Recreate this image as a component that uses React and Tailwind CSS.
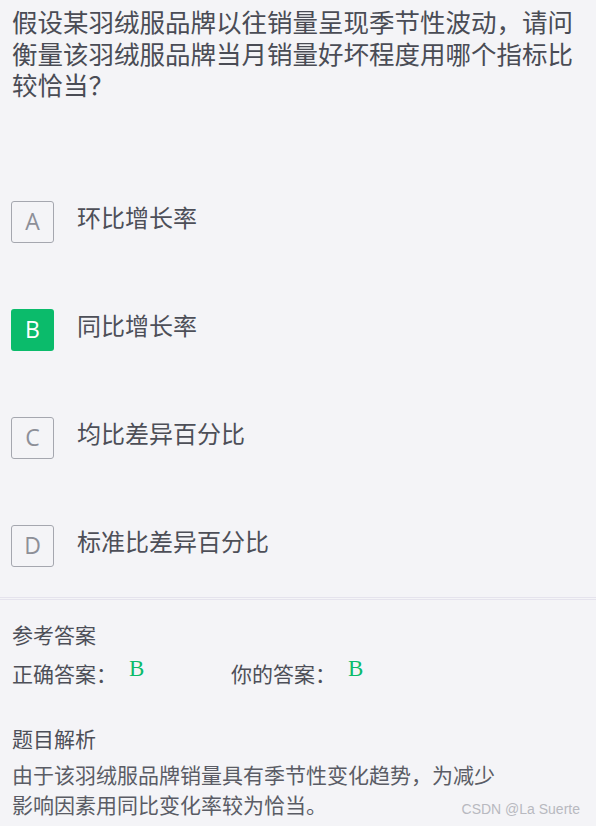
const options = [
  { key: 'A', text: '环比增长率' },
  { key: 'B', text: '同比增长率', picked: true },
  { key: 'C', text: '均比差异百分比' },
  { key: 'D', text: '标准比差异百分比' },
];

const App = () => {
  return (
    <div className="relative w-[596px] min-h-[826px] bg-[#f4f4f7] text-[#4a4c55] font-['Noto_Sans_CJK_SC',sans-serif]">
      <p className="px-3 pt-[5px] text-[25.5px] leading-[31.5px]">
        假设某羽绒服品牌以往销量呈现季节性波动，请问
        <br />
        衡量该羽绒服品牌当月销量好坏程度用哪个指标比
        <br />
        较恰当？
      </p>

      <div className="mt-[101px] flex flex-col gap-[66px] px-[11px]">
        {options.map(opt => (
          <div key={opt.key} className="flex items-center gap-[23px]">
            <div
              className={
                opt.picked
                  ? "flex h-[42px] w-[43px] items-center justify-center rounded-[3px] bg-[#0bbb6b] font-['Open_Sans',sans-serif] text-[23px] text-white"
                  : "flex h-[42px] w-[43px] items-center justify-center rounded-[3px] border border-[#a5a7af] font-['Open_Sans',sans-serif] text-[23px] text-[#8d8f98]"
              }
            >
              {opt.key}
            </div>
            <span className="mb-[9px] text-[24px] leading-[32px] text-[#4d4f58]">{opt.text}</span>
          </div>
        ))}
      </div>

      <div className="mt-[30px] h-[3px] border-y border-[#e5e3ed]" />

      <div className="px-3 text-[21px] leading-[30px] text-[#4d4f58]">
        <p className="mt-[19px]">参考答案</p>
        <div className="mt-[9px] flex">
          <div className="flex w-[219px] items-start">
            <span>正确答案：</span>
            <span className="-mt-[4px] ml-[12px] font-['Liberation_Serif',serif] text-[23px] text-[#0bbb6b]">B</span>
          </div>
          <div className="flex items-start">
            <span>你的答案：</span>
            <span className="-mt-[4px] ml-[12px] font-['Liberation_Serif',serif] text-[23px] text-[#0bbb6b]">B</span>
          </div>
        </div>
        <p className="mt-[35px]">题目解析</p>
        <p className="mt-[6px] text-[#5a5c65]">
          由于该羽绒服品牌销量具有季节性变化趋势，为减少
          <br />
          影响因素用同比变化率较为恰当。
        </p>
      </div>

      <span className="absolute right-[16px] bottom-[6px] font-['Liberation_Sans',sans-serif] text-[14px] text-[#b8b9c0]">
        CSDN @La Suerte
      </span>
    </div>
  );
};

export default App;
